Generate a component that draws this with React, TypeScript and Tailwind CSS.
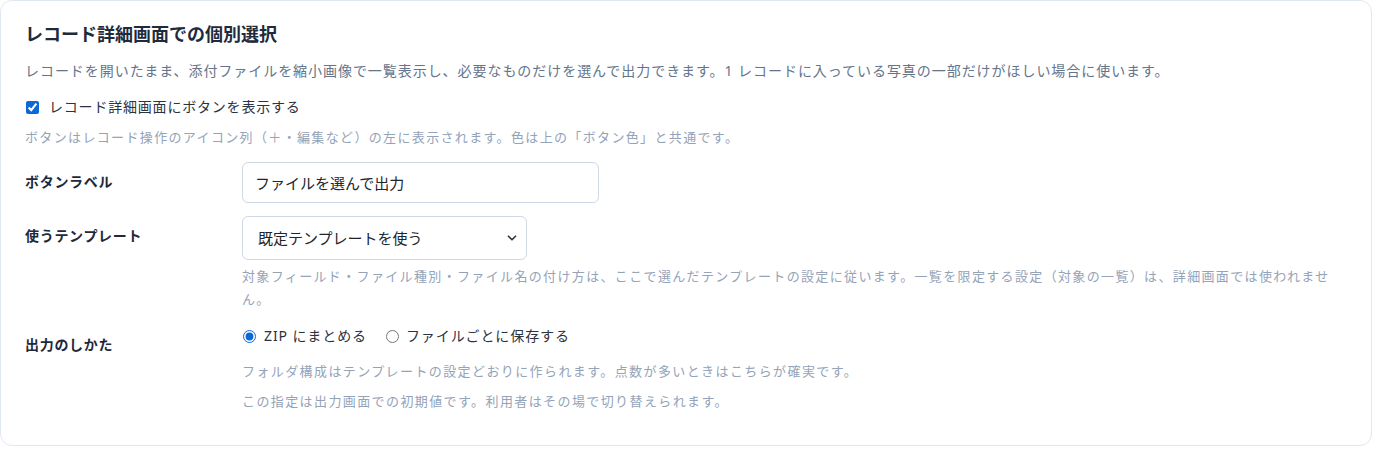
import { ChevronDown } from "lucide-react";

export default function App() {
  return (
    <div
      className="min-h-screen bg-white pr-[28px]"
      style={{ fontFamily: '"Noto Sans", "Noto Sans CJK JP", sans-serif' }}
    >
      <section className="h-[446px] w-[1372px] rounded-[12px] border border-[#e2e8f0] bg-white px-6 pt-[21px]">
        <h2 className="text-[18px] font-bold leading-[24px] text-[#1e2b3c]">
          レコード詳細画面での個別選択
        </h2>
        <p className="mt-[14px] text-[14px] leading-[22px] tracking-[0.95px] text-[#64748b]">
          レコードを開いたまま、添付ファイルを縮小画像で一覧表示し、必要なものだけを選んで出力できます。1
          レコードに入っている写真の一部だけがほしい場合に使います。
        </p>

        <label className="mt-[14px] flex items-center gap-[10px] text-[14px] leading-[22px] tracking-[0.8px] text-[#2b3340]">
          <input
            type="checkbox"
            defaultChecked
            className="m-0 ml-px h-[13px] w-[13px] accent-[#0b68d9]"
          />
          レコード詳細画面にボタンを表示する
        </label>
        <p className="mt-[9px] text-[13px] leading-[20px] tracking-[1.35px] text-[#94a3b8]">
          ボタンはレコード操作のアイコン列（＋・編集など）の左に表示されます。色は上の「ボタン色」と共通です。
        </p>

        <div className="mt-[15px] grid grid-cols-[205px_1fr] gap-x-3 gap-y-[13px]">
          <div className="pt-[10px] text-[14px] font-bold leading-[20px] tracking-[0.7px] text-[#1e293b]">
            ボタンラベル
          </div>
          <div>
            <input
              type="text"
              defaultValue="ファイルを選んで出力"
              className="h-[41px] w-[357px] rounded-[6px] border border-[#cfd8e3] px-[12px] text-[15px] text-[#212529] outline-none"
            />
          </div>

          <div className="pt-[10px] text-[14px] font-bold leading-[20px] tracking-[0.7px] text-[#1e293b]">
            使うテンプレート
          </div>
          <div>
            <div className="relative w-[285px]">
              <select className="h-[44px] w-full appearance-none rounded-[6px] border border-[#cfd8e3] bg-white pl-[15px] pr-10 text-[15px] text-[#212529] outline-none">
                <option>既定テンプレートを使う</option>
              </select>
              <ChevronDown
                className="pointer-events-none absolute right-[8px] top-[15px] h-[14px] w-[14px] text-[#343a40]"
                strokeWidth={3}
              />
            </div>
            <p className="mt-[5px] text-[13px] leading-[23px] tracking-[1.35px] text-[#94a3b8]">
              対象フィールド・ファイル種別・ファイル名の付け方は、ここで選んだテンプレートの設定に従います。一覧を限定する設定（対象の一覧）は、詳細画面では使われません。
            </p>
          </div>

          <div className="pt-[11px] text-[14px] font-bold leading-[20px] tracking-[0.7px] text-[#1e293b]">
            出力のしかた
          </div>
          <div className="pt-[2px]">
            <div className="flex items-center gap-[19px] text-[14px] leading-[20px] tracking-[0.9px] text-[#2b3340]">
              <label className="flex items-center gap-[8px]">
                <input
                  type="radio"
                  name="mode"
                  defaultChecked
                  className="m-0 ml-px h-[13px] w-[13px] accent-[#0b68d9]"
                />
                ZIP にまとめる
              </label>
              <label className="flex items-center gap-[7px]">
                <input
                  type="radio"
                  name="mode"
                  className="m-0 h-[13px] w-[13px] accent-[#0b68d9]"
                />
                ファイルごとに保存する
              </label>
            </div>
            <p className="mt-[14px] text-[13px] leading-[22px] tracking-[1.4px] text-[#94a3b8]">
              フォルダ構成はテンプレートの設定どおりに作られます。点数が多いときはこちらが確実です。
            </p>
            <p className="mt-[8px] text-[13px] leading-[22px] tracking-[1.4px] text-[#94a3b8]">
              この指定は出力画面での初期値です。利用者はその場で切り替えられます。
            </p>
          </div>
        </div>
      </section>
    </div>
  );
}
